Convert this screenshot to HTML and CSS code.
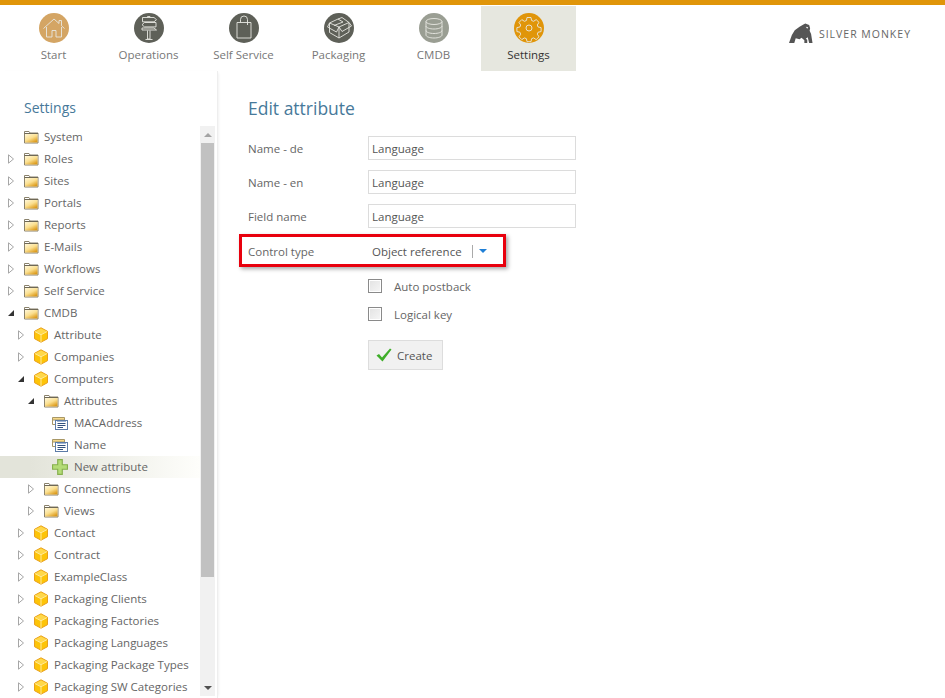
FILE: index.html
```html
<!DOCTYPE html>
<html>
<head>
    <title>Edit attribute</title>
    <link rel="stylesheet" href="styles.css">
</head>
<body>
    <svg class="defs" width="0" height="0">
        <defs>
            <linearGradient id="folderFill" x1="0" y1="0" x2="0.7" y2="1">
                <stop offset="0" stop-color="#fff8dc"/>
                <stop offset="0.55" stop-color="#fbdf8e"/>
                <stop offset="1" stop-color="#dc9c1e"/>
            </linearGradient>
            <symbol id="folder" viewBox="0 0 16 14">
                <path d="M1.500 3V1.500H6L7 3H15V13H1.500Z" fill="#fff" stroke="#8a826c"/>
                <rect x="2" y="4" width="12.500" height="8.500" fill="url(#folderFill)"/>
                <path d="M1.500 3.500H15" stroke="#6e6856"/>
            </symbol>
            <symbol id="cube" viewBox="0 0 16 16">
                <path d="M8 .8 14.500 4.300V11.700L8 15.200 1.500 11.700V4.300Z" fill="#fdc408" stroke="#e8a020"/>
                <path d="M2 4.600 8 7.800 14 4.600 8 1.400Z" fill="#ffd84a"/>
                <path d="M2 4.600 8 7.800 14 4.600M8 7.800V15" fill="none" stroke="#ffe99a"/>
            </symbol>
            <symbol id="field" viewBox="0 0 16 14">
                <path d="M.5 1.500H12.500V4H.5Z" fill="#f6d98a" stroke="#a89766"/>
                <path d="M.5 4V8.500H4" fill="#fff" stroke="#a89766"/>
                <rect x="3.500" y="4.500" width="12" height="9" fill="#fff" stroke="#5d7ca8"/>
                <path d="M5 5.500H14" stroke="#9fb6d6"/>
                <path d="M5.500 7.500H13.500M5.500 9.500H13.500M5.500 11.500H11" stroke="#33527f"/>
            </symbol>
            <symbol id="plus" viewBox="0 0 14 14">
                <path d="M5 .5H9V5H13.500V9H9V13.500H5V9H.5V5H5Z" fill="#b4dc78" stroke="#86b04e"/>
            </symbol>
            <symbol id="open" viewBox="0 0 8 8">
                <path d="M7 1V7H1Z" fill="#333"/>
            </symbol>
            <symbol id="closed" viewBox="0 0 8 10">
                <path d="M1.500 .8 6.500 5 1.500 9.200Z" fill="#fff" stroke="#a6a6a6"/>
            </symbol>
        </defs>
    </svg>

    <div class="topline"></div>

    <div class="header">
        <div class="nav">
            <a class="nav-item">
                <span class="nav-icon tan">
                    <svg viewBox="0 0 30 30" class="line"><path d="M4.500 15.500 15 6l5 4.500V7.500h2.500v5.300l3 2.700M7.500 14V24h5.500v-6.500h4V24h5.500V14"/></svg>
                </span>
                Start
            </a>
            <a class="nav-item">
                <span class="nav-icon dark">
                    <svg viewBox="0 0 30 30" class="line"><path d="M8.500 4.500H20l2.500 2.200L20 8.800H8.500ZM22 9.500H10.500L8 11.700l2.500 2.200H22ZM8 15H20l2.500 2H8ZM13.500 4.500V3.500h2.500v1M13.500 17.500V26h2.500V17.500M11.500 26.500h7"/></svg>
                </span>
                Operations
            </a>
            <a class="nav-item">
                <span class="nav-icon dark">
                    <svg viewBox="0 0 30 30" class="line"><path d="M8 9.500H22V25H8ZM11.500 9.500V6.500a3.500 3.500 0 0 1 7 0V12"/></svg>
                </span>
                Self Service
            </a>
            <a class="nav-item">
                <span class="nav-icon dark">
                    <svg viewBox="0 0 30 30" class="line"><path d="M15 14 25 9.500V19L15 25 5.500 19.500V10ZM15 14V25M5.500 10 3.500 14 12.500 19 15 14M25 9.500 27.500 13 18 18.500 15 14M5.500 10 14 6 19 9 10 12.500M14 6l4-1.500L25 9.500"/></svg>
                </span>
                Packaging
            </a>
            <a class="nav-item">
                <span class="nav-icon grey">
                    <svg viewBox="0 0 30 30" class="line"><ellipse cx="15" cy="8.500" rx="8" ry="3"/><path d="M7 8.500V22c0 1.700 3.600 3 8 3s8-1.300 8-3V8.500M7 13c0 1.700 3.600 3 8 3s8-1.300 8-3M7 17.500c0 1.700 3.600 3 8 3s8-1.300 8-3"/></svg>
                </span>
                CMDB
            </a>
            <a class="nav-item active">
                <span class="nav-icon orange">
                    <svg viewBox="0 0 30 30" class="line"><circle cx="15" cy="15" r="3"/><path d="M13 4.500h4l.6 3 2 .8 2.600-1.700 2.800 2.800-1.700 2.600.8 2 3 .6v4l-3 .6-.8 2 1.700 2.600-2.800 2.800-2.600-1.700-2 .8-.6 3h-4l-.6-3-2-.8-2.600 1.700-2.800-2.800 1.700-2.600-.8-2-3-.6v-4l3-.6.8-2-1.700-2.600 2.800-2.800 2.600 1.700 2-.8Z"/></svg>
                </span>
                Settings
            </a>
        </div>
        <div class="logo">
            <svg viewBox="0 0 25 22" width="24" height="22"><path d="M15 1 17 0 21 1.500 22 5 21.500 7.500 23 11 24.500 20.500 21 20.500 19.500 14.500 17.500 16 19 17 19 20.500 16 20.500 16 17.500 13 15 11 16.500 7 15.500 5.500 20.500 0 20.500 3 12 6 7 11 3.500Z" fill="#555"/><path d="M17.500 3.500 20 4 19 5.500Z" fill="#fff"/></svg>
            <span>SILVER MONKEY</span>
        </div>
    </div>

    <div class="main">
        <div class="sidebar">
            <h2 class="side-title">Settings</h2>
            <div class="tree-wrap">
                <div class="tree">
                    <div class="row l0"><span class="tog"></span><svg class="ico"><use href="#folder"/></svg>System</div>
                    <div class="row l0"><svg class="tog"><use href="#closed"/></svg><svg class="ico"><use href="#folder"/></svg>Roles</div>
                    <div class="row l0"><svg class="tog"><use href="#closed"/></svg><svg class="ico"><use href="#folder"/></svg>Sites</div>
                    <div class="row l0"><svg class="tog"><use href="#closed"/></svg><svg class="ico"><use href="#folder"/></svg>Portals</div>
                    <div class="row l0"><svg class="tog"><use href="#closed"/></svg><svg class="ico"><use href="#folder"/></svg>Reports</div>
                    <div class="row l0"><svg class="tog"><use href="#closed"/></svg><svg class="ico"><use href="#folder"/></svg>E-Mails</div>
                    <div class="row l0"><svg class="tog"><use href="#closed"/></svg><svg class="ico"><use href="#folder"/></svg>Workflows</div>
                    <div class="row l0"><svg class="tog"><use href="#closed"/></svg><svg class="ico"><use href="#folder"/></svg>Self Service</div>
                    <div class="row l0"><svg class="tog"><use href="#open"/></svg><svg class="ico"><use href="#folder"/></svg>CMDB</div>
                    <div class="row l1"><svg class="tog"><use href="#closed"/></svg><svg class="ico"><use href="#cube"/></svg>Attribute</div>
                    <div class="row l1"><svg class="tog"><use href="#closed"/></svg><svg class="ico"><use href="#cube"/></svg>Companies</div>
                    <div class="row l1"><svg class="tog"><use href="#open"/></svg><svg class="ico"><use href="#cube"/></svg>Computers</div>
                    <div class="row l2"><svg class="tog"><use href="#open"/></svg><svg class="ico"><use href="#folder"/></svg>Attributes</div>
                    <div class="row l3"><svg class="ico"><use href="#field"/></svg>MACAddress</div>
                    <div class="row l3"><svg class="ico"><use href="#field"/></svg>Name</div>
                    <div class="row l3 selected"><svg class="ico"><use href="#plus"/></svg>New attribute</div>
                    <div class="row l2"><svg class="tog"><use href="#closed"/></svg><svg class="ico"><use href="#folder"/></svg>Connections</div>
                    <div class="row l2"><svg class="tog"><use href="#closed"/></svg><svg class="ico"><use href="#folder"/></svg>Views</div>
                    <div class="row l1"><svg class="tog"><use href="#closed"/></svg><svg class="ico"><use href="#cube"/></svg>Contact</div>
                    <div class="row l1"><svg class="tog"><use href="#closed"/></svg><svg class="ico"><use href="#cube"/></svg>Contract</div>
                    <div class="row l1"><svg class="tog"><use href="#closed"/></svg><svg class="ico"><use href="#cube"/></svg>ExampleClass</div>
                    <div class="row l1"><svg class="tog"><use href="#closed"/></svg><svg class="ico"><use href="#cube"/></svg>Packaging Clients</div>
                    <div class="row l1"><svg class="tog"><use href="#closed"/></svg><svg class="ico"><use href="#cube"/></svg>Packaging Factories</div>
                    <div class="row l1"><svg class="tog"><use href="#closed"/></svg><svg class="ico"><use href="#cube"/></svg>Packaging Languages</div>
                    <div class="row l1"><svg class="tog"><use href="#closed"/></svg><svg class="ico"><use href="#cube"/></svg>Packaging Package Types</div>
                    <div class="row l1"><svg class="tog"><use href="#closed"/></svg><svg class="ico"><use href="#cube"/></svg>Packaging SW Categories</div>
                </div>
                <div class="scrollbar">
                    <div class="arrow up"></div>
                    <div class="thumb"></div>
                    <div class="arrow down"></div>
                </div>
            </div>
        </div>

        <div class="content">
            <h1 class="title">Edit attribute</h1>
            <div class="form-row"><label>Name - de</label><input class="text" type="text" value="Language"></div>
            <div class="form-row"><label>Name - en</label><input class="text" type="text" value="Language"></div>
            <div class="form-row"><label>Field name</label><input class="text" type="text" value="Language"></div>
            <div class="form-row marked">
                <label>Control type</label>
                <div class="select"><span>Object reference</span><i class="sep"></i><i class="caret"></i></div>
            </div>
            <div class="check-row"><span class="box"></span>Auto postback</div>
            <div class="check-row"><span class="box"></span>Logical key</div>
            <button class="btn">
                <svg viewBox="0 0 16 14" width="16" height="14"><path d="M0.500 7.500 3 6 6 9.500 14 0.500 15.500 1.500 6.500 13.500Z" fill="#3fae2a"/></svg>
                Create
            </button>
        </div>
    </div>
</body>
</html>
```

FILE: styles.css
```css
* {
    box-sizing: border-box;
}
html, body {
    height: 100%;
}
body {
    margin: 0;
    overflow: hidden;
    background: #fff;
    font-family: "Open Sans", "Noto Sans", sans-serif;
    font-size: 11.5px;
    color: #666;
}
.defs {
    display: block;
    height: 0;
}
.topline {
    height: 5px;
    background: #e09509;
}

/* header */
.header {
    display: flex;
    justify-content: space-between;
    padding: 1px 34px 0 6px;
}
.nav {
    display: flex;
}
.nav-item {
    width: 95px;
    height: 65px;
    padding-top: 7px;
    display: flex;
    flex-direction: column;
    align-items: center;
    gap: 3px;
    line-height: 18px;
    color: #777;
}
.nav-item.active {
    background: #e6e7df;
    color: #333;
}
.nav-icon {
    width: 30px;
    height: 30px;
    border-radius: 50%;
    display: block;
}
.nav-icon svg {
    display: block;
}
.line {
    fill: none;
    stroke: #e8e8e2;
    stroke-width: 0.9;
}
.tan { background: #d4a564; }
.dark { background: #5e6058; }
.grey { background: #9a9e93; }
.orange { background: #e09509; }
.logo {
    display: flex;
    align-items: center;
    gap: 6px;
    height: 22px;
    margin-top: 17px;
    font-size: 10.5px;
    letter-spacing: 1px;
    color: #666;
}
.logo svg {
    display: block;
}

/* sidebar */
.main {
    display: flex;
    height: 627px;
}
.sidebar {
    width: 218px;
    flex: none;
    border-right: 1px solid #eee;
    box-shadow: 2px 0 3px -2px rgba(0, 0, 0, 0.1);
    display: flex;
    flex-direction: column;
}
.side-title {
    margin: 0;
    padding: 26px 0 0 24px;
    height: 55px;
    font-size: 14px;
    line-height: 22px;
    font-weight: 400;
    color: #47799a;
}
.tree-wrap {
    display: flex;
    height: 570px;
    overflow: hidden;
}
.tree {
    width: 200px;
    flex: none;
    overflow: hidden;
}
.row {
    height: 22px;
    display: flex;
    align-items: center;
    line-height: 22px;
    white-space: nowrap;
}
.l0 { padding-left: 7px; }
.l1 { padding-left: 17px; }
.l2 { padding-left: 27px; }
.l3 { padding-left: 52px; }
.tog {
    width: 8px;
    height: 10px;
    margin-right: 8px;
    flex: none;
    display: block;
}
.ico {
    width: 16px;
    height: 16px;
    margin-right: 5px;
    flex: none;
}
.l3 .ico {
    margin-right: 6px;
}
.selected {
    background: linear-gradient(to right, #e3e4da 15%, #fefefb);
}

/* scrollbar */
.scrollbar {
    width: 15px;
    height: 570px;
    flex: none;
    background: #f1f1f1;
    display: flex;
    flex-direction: column;
}
.thumb {
    height: 434px;
    margin: 0 1px;
    background: #c1c1c1;
}
.arrow {
    height: 17px;
    flex: none;
    display: flex;
    align-items: center;
    justify-content: center;
}
.arrow.down {
    margin-top: auto;
}
.arrow.up::after {
    content: "";
    border: 4px solid transparent;
    border-top: 0;
    border-bottom: 4px solid #a3a3a3;
}
.arrow.down::after {
    content: "";
    border: 4px solid transparent;
    border-bottom: 0;
    border-top: 4px solid #505050;
}

/* form */
.content {
    padding: 23px 0 0 30px;
}
.title {
    margin: 0 0 14px;
    font-size: 17.5px;
    line-height: 28px;
    font-weight: 400;
    color: #47799a;
}
.form-row {
    display: flex;
    align-items: center;
    height: 24px;
    margin-bottom: 10px;
}
.form-row label {
    width: 120px;
    flex: none;
}
.text {
    width: 208px;
    height: 24px;
    border: 1px solid #dcdcdc;
    padding: 0 3px;
    font: inherit;
    color: #555;
    outline: none;
}
.marked {
    width: 267px;
    height: 33px;
    margin: -4px 0 12px -9px;
    padding: 1px 0 0 6px;
    border: 3px solid #e8000d;
    box-shadow: 2px 2px 4px rgba(0, 0, 0, 0.35);
}
.select {
    display: flex;
    align-items: center;
    padding-left: 4px;
    color: #555;
}
.sep {
    width: 1px;
    height: 13px;
    margin-left: 10px;
    background: #aaa;
}
.caret {
    margin-left: 6px;
    border: 4px solid transparent;
    border-bottom: 0;
    border-top: 4px solid #1f7fd6;
}
.check-row {
    display: flex;
    align-items: center;
    height: 14px;
    margin: 0 0 14px 120px;
}
.box {
    width: 14px;
    height: 14px;
    margin-right: 12px;
    border: 1px solid #8a8a8a;
    background: linear-gradient(135deg, #e2e2e2, #f6f6f6);
    box-shadow: inset 0 0 0 1px #fff;
}
.btn {
    display: flex;
    align-items: center;
    gap: 5px;
    width: 75px;
    height: 30px;
    margin: 19px 0 0 120px;
    padding: 0 0 0 7px;
    border: 1px solid #ddd;
    background: #f1f1f1;
    font: inherit;
    color: #555;
}
```
